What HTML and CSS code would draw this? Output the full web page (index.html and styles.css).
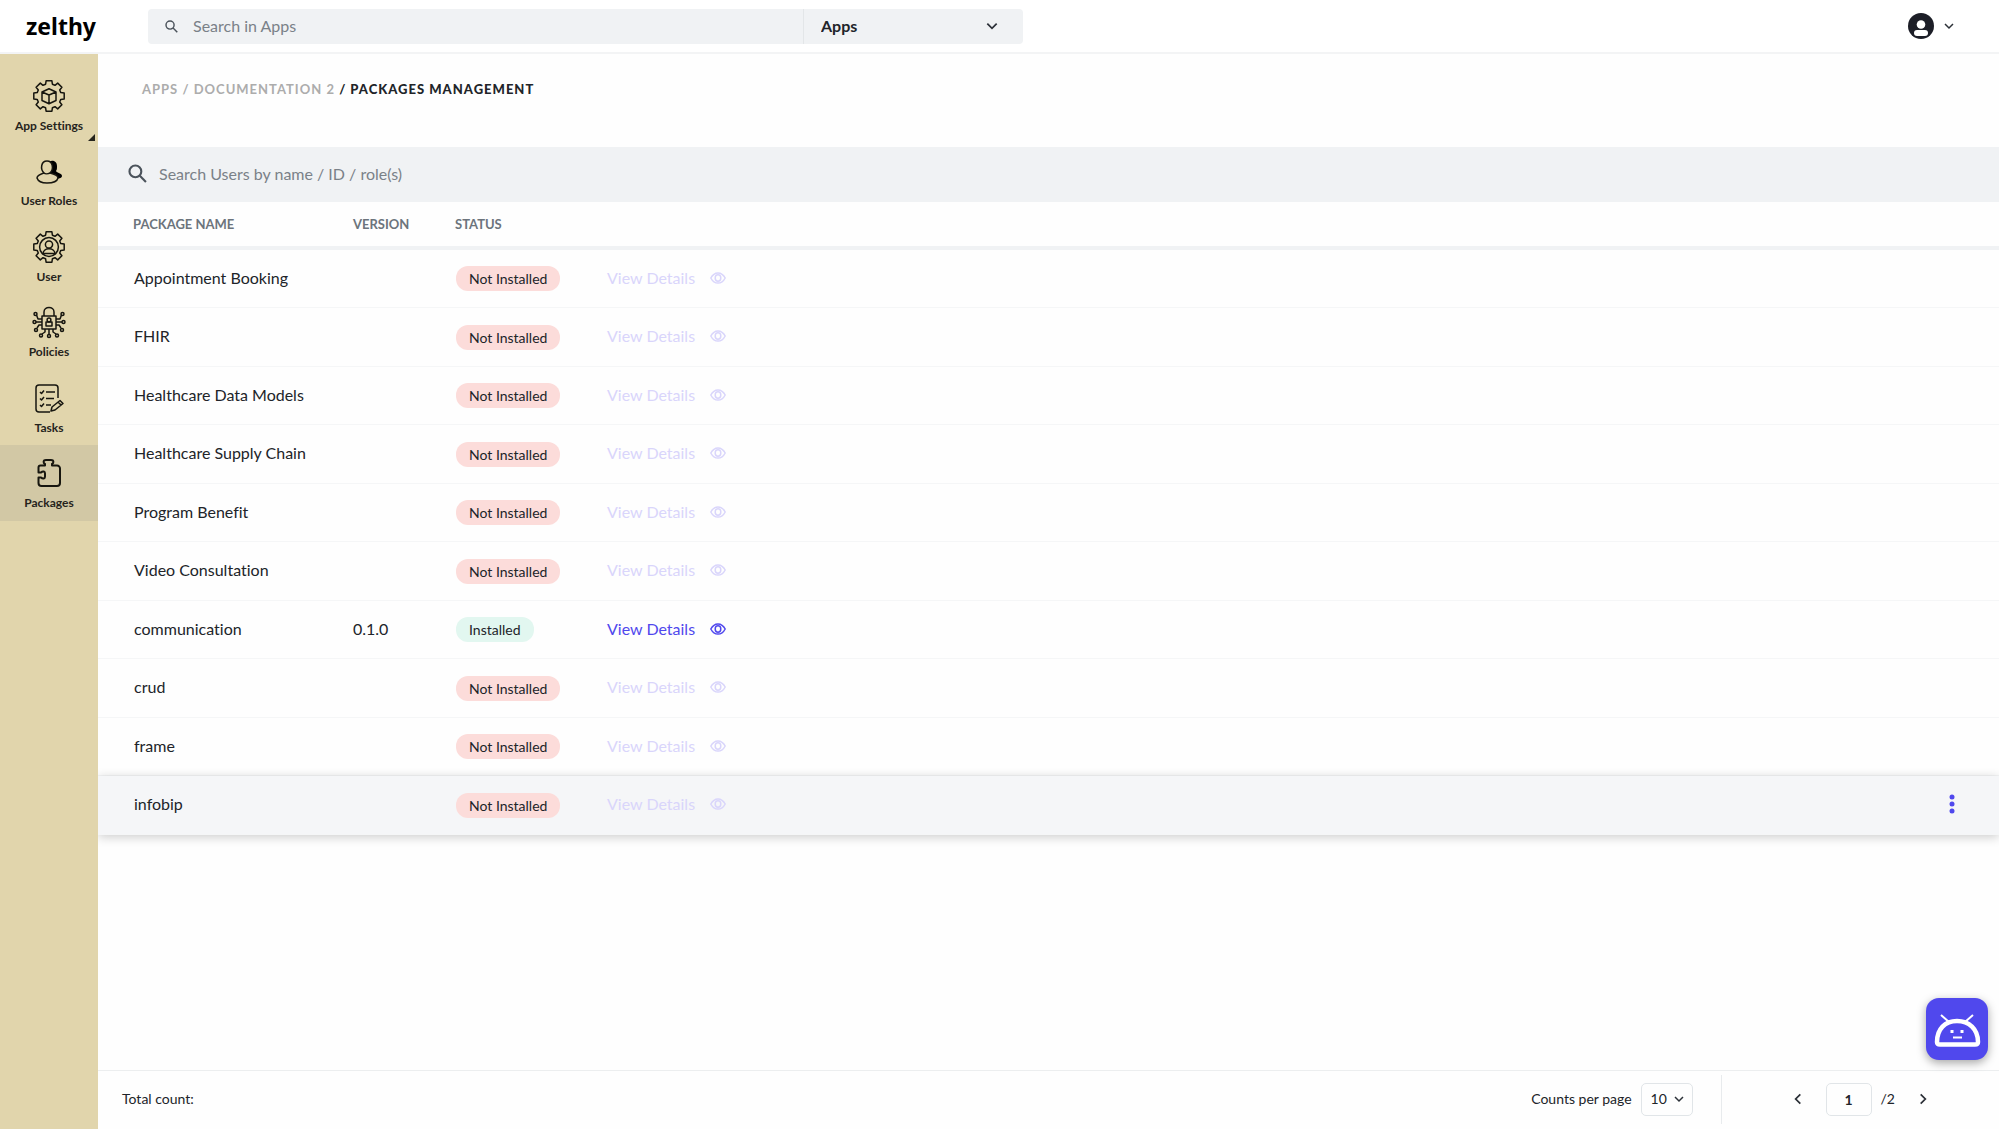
FILE: index.html
```html
<!DOCTYPE html>
<html lang="en">
<head>
<meta charset="utf-8">
<title>Packages Management</title>
<link rel="stylesheet" href="styles.css">
</head>
<body>
<svg class="sprite" aria-hidden="true">
  <symbol id="search" viewBox="0 0 18 18"><circle cx="7" cy="7" r="5.6"/><path d="M11.2 11.2 17 17"/></symbol>
  <symbol id="down" viewBox="0 0 12 12"><path d="M2 4l4 4 4-4"/></symbol>
  <symbol id="gear" viewBox="-17 -17 34 34"><path d="M15.2-2.9V2.9L11.8 3.4 10.7 6 12.9 8.7 8.7 12.9 6 10.7 3.4 11.8 2.9 15.2H-2.9L-3.4 11.8-6 10.7-8.7 12.9-12.9 8.7-10.7 6-11.8 3.4-15.2 2.9V-2.9L-11.8-3.4-10.7-6-12.9-8.7-8.7-12.9-6-10.7-3.4-11.8-2.9-15.2H2.9L3.4-11.8 6-10.7 8.7-12.9 12.9-8.7 10.7-6 11.8-3.4Z"/></symbol>
  <symbol id="eye" viewBox="0 0 16 16"><path d="M.8 8C2.6 4.6 5 2.9 8 2.9S13.400 4.600 15.200 8C13.400 11.400 11 13.100 8 13.100S2.600 11.400.8 8Z"/><ellipse cx="8" cy="8" rx="2.800" ry="3.200"/></symbol>
</svg>

<header class="topbar">
  <a class="logo" href="#">zelthy</a>
  <form class="global-search">
    <label class="global-field">
      <svg class="icon icon-small"><use href="#search"/></svg>
      <input class="global-input" type="search" placeholder="Search in Apps" aria-label="Search in Apps">
    </label>
    <div class="scope">
      <select class="scope-select" aria-label="Search scope"><option>Apps</option></select>
      <svg class="icon chevron"><use href="#down"/></svg>
    </div>
  </form>
  <button class="account" type="button" aria-label="Account">
    <svg class="avatar" viewBox="0 0 26 26"><circle cx="13" cy="13" r="13" fill="#1c1e27"/><circle cx="13" cy="11.5" r="4.3" fill="#fff"/><rect x="6" y="17" width="14" height="6" rx="3" fill="#fff"/></svg>
    <svg class="icon chevron chevron-thin"><use href="#down"/></svg>
  </button>
</header>

<div class="shell">
  <nav class="sidebar">
    <a class="nav-item has-submenu" href="#">
      <svg class="nav-icon" viewBox="-17 -17 34 34"><use href="#gear" x="-17" y="-17" width="34" height="34"/><path d="M0-7.3 7-4V4.500L0 7.800-7 4.500V-4ZM-7-4 0-1 7-4M0-1V7.800"/></svg>
      App Settings
    </a>
    <a class="nav-item" href="#">
      <svg class="nav-icon" viewBox="0 0 34 34"><path fill="#000" stroke="none" d="M16 9c1-3 9-4 9 3 0 2 0 4-1 5 1 2 6 2 6 5 0 2-3 3-6 2l-5-5Z"/><path class="nav-fill" d="M5 24c0-3 4-4 7-5-4-4-3-12 3-12s7 8 3 12c4 1 8 2 8 5-1 4-5 5-11 5S6 27 5 24Z"/><path d="M12 19c1 1 4 1 6 0"/></svg>
      User Roles
    </a>
    <a class="nav-item" href="#">
      <svg class="nav-icon" viewBox="-17 -17 34 34"><use href="#gear" x="-17" y="-17" width="34" height="34"/><circle r="9.400"/><circle cy="-2.500" r="3.600"/><path d="M-6 7C-6 0 6 0 6 7M-6 6.500H6"/></svg>
      User
    </a>
    <a class="nav-item" href="#">
      <svg class="nav-icon" viewBox="0 0 34 34"><path d="M10 11h14v13H10ZM12 11V7c0-6 10-6 10 0v4M14 21v-4h6v4ZM10 14H6L4.500 10M24 14h4l1.500-4M10 17H4M24 17h6M10 20H7l-2 3M24 20h3l2 3M13 24v3l-3 2M17 24v5M21 24v3l3 2"/><circle cx="17" cy="15" r="1.900"/><circle cx="3.500" cy="9" r="1.500"/><circle cx="30.500" cy="9" r="1.500"/><circle cx="2.500" cy="17" r="1.500"/><circle cx="31.500" cy="17" r="1.500"/><circle cx="4" cy="25" r="1.500"/><circle cx="30" cy="25" r="1.500"/><circle cx="9" cy="30.500" r="1.500"/><circle cx="17" cy="31" r="1.500"/><circle cx="25" cy="30.500" r="1.500"/></svg>
      Policies
    </a>
    <a class="nav-item" href="#">
      <svg class="nav-icon" viewBox="0 0 34 34"><path d="M18 31H7a3 3 0 0 1-3-3V7a3 3 0 0 1 3-3h16a3 3 0 0 1 3 3v10M14 11h9M14 17.500h8M14 24h5M8 11l1.500 1.500L12 9.500M8 17.500 9.500 19l2.500-3M8 24l1.500 1.500L12 22.500M19 30l1-4 8-6.500 3 3-8 6.500ZM26 21l3 3"/></svg>
      Tasks
    </a>
    <a class="nav-item current" href="#" aria-current="page">
      <svg class="nav-icon nav-bold" viewBox="0 0 34 34"><path d="M8.500 9.500H13V8c-2-1-2-4 1-4h5c3 0 3 3 1 4v1.500h5a3 3 0 0 1 3 3V27a3 3 0 0 1-3 3H9.500a3 3 0 0 1-3-3v-5.500H9c2 2 4 1 4-1v-3c0-2-2-3-4-1H6.500v-5a2 2 0 0 1 2-2Z"/></svg>
      Packages
    </a>
  </nav>

  <main class="content">
    <nav class="crumbs" aria-label="Breadcrumb">
      <a href="#">Apps</a> / <a href="#">Documentation 2</a> <strong>/ Packages Management</strong>
    </nav>
    <label class="user-search">
      <svg class="icon icon-search"><use href="#search"/></svg>
      <input class="user-input" type="search" placeholder="Search Users by name / ID / role(s)" aria-label="Search users">
    </label>

    <table class="packages">
      <colgroup><col class="col-name"><col class="col-version"><col class="col-status"><col class="col-view"><col><col class="col-menu"></colgroup>
      <thead><tr><th>Package Name</th><th>Version</th><th>Status</th><th></th><th></th><th></th></tr></thead>
      <tbody>
        <tr><td>Appointment Booking</td><td></td><td class="status"><span class="pill">Not Installed</span></td><td><button class="view" type="button" disabled>View Details <svg class="eye"><use href="#eye"/></svg></button></td><td></td><td></td></tr>
        <tr><td>FHIR</td><td></td><td class="status"><span class="pill">Not Installed</span></td><td><button class="view" type="button" disabled>View Details <svg class="eye"><use href="#eye"/></svg></button></td><td></td><td></td></tr>
        <tr><td>Healthcare Data Models</td><td></td><td class="status"><span class="pill">Not Installed</span></td><td><button class="view" type="button" disabled>View Details <svg class="eye"><use href="#eye"/></svg></button></td><td></td><td></td></tr>
        <tr><td>Healthcare Supply Chain</td><td></td><td class="status"><span class="pill">Not Installed</span></td><td><button class="view" type="button" disabled>View Details <svg class="eye"><use href="#eye"/></svg></button></td><td></td><td></td></tr>
        <tr><td>Program Benefit</td><td></td><td class="status"><span class="pill">Not Installed</span></td><td><button class="view" type="button" disabled>View Details <svg class="eye"><use href="#eye"/></svg></button></td><td></td><td></td></tr>
        <tr><td>Video Consultation</td><td></td><td class="status"><span class="pill">Not Installed</span></td><td><button class="view" type="button" disabled>View Details <svg class="eye"><use href="#eye"/></svg></button></td><td></td><td></td></tr>
        <tr><td>communication</td><td>0.1.0</td><td class="status"><span class="pill pill-ok">Installed</span></td><td><button class="view" type="button">View Details <svg class="eye"><use href="#eye"/></svg></button></td><td></td><td></td></tr>
        <tr><td>crud</td><td></td><td class="status"><span class="pill">Not Installed</span></td><td><button class="view" type="button" disabled>View Details <svg class="eye"><use href="#eye"/></svg></button></td><td></td><td></td></tr>
        <tr><td>frame</td><td></td><td class="status"><span class="pill">Not Installed</span></td><td><button class="view" type="button" disabled>View Details <svg class="eye"><use href="#eye"/></svg></button></td><td></td><td></td></tr>
        <tr class="active"><td>infobip</td><td></td><td class="status"><span class="pill">Not Installed</span></td><td><button class="view" type="button" disabled>View Details <svg class="eye"><use href="#eye"/></svg></button></td><td></td><td><button class="menu" type="button" aria-label="Row actions"><svg class="dots" viewBox="0 0 6 20"><circle cx="3" cy="3" r="2.500"/><circle cx="3" cy="10" r="2.500"/><circle cx="3" cy="17" r="2.500"/></svg></button></td></tr>
      </tbody>
    </table>

    <footer class="footer">
      <span class="total">Total count:</span>
      <label class="per-page" for="per-page">Counts per page</label>
      <div class="count">
        <select class="count-select" id="per-page"><option>10</option></select>
        <svg class="icon chevron chevron-thin"><use href="#down"/></svg>
      </div>
      <div class="pager">
        <button class="step" type="button" aria-label="Previous page"><svg class="icon chevron" viewBox="0 0 12 12"><path d="M8 2 4 6l4 4"/></svg></button>
        <input class="page" type="text" value="1" aria-label="Page">
        <span class="pages">/2</span>
        <button class="step" type="button" aria-label="Next page"><svg class="icon chevron" viewBox="0 0 12 12"><path d="M4 2l4 4-4 4"/></svg></button>
      </div>
    </footer>
  </main>
</div>

<button class="bot" type="button" aria-label="Open assistant">
  <svg viewBox="0 0 62 62" fill="none" stroke="#fff"><path stroke-width="4.500" d="M11 44c0-13 8-21 20-21s21 8 21 21c0 1.500-1 2.500-3 2.500H14c-2 0-3-1-3-2.500Z"/><path stroke-width="2" d="M15 17l8 7M47 17l-8 7M27 39.500h9"/><path stroke="none" fill="#fff" d="M24.500 32h3v3h-3ZM34.500 32h3v3h-3Z"/></svg>
</button>
</body>
</html>
```
FILE: styles.css
```css
* { box-sizing: border-box; }

body {
  margin: 0;
  min-height: 100vh;
  display: flex;
  flex-direction: column;
  background: #fefefe;
  color: #212429;
  font: 16px/20px Lato, sans-serif;
  font-variant-ligatures: none;
}

button, input, select {
  margin: 0;
  padding: 0;
  border: 0;
  background: none;
  color: inherit;
  font: inherit;
  appearance: none;
  outline: 0;
}

a { color: inherit; text-decoration: none; }
input::placeholder { color: #7a8188; opacity: 1; }

.sprite { display: none; }

.icon {
  flex: none;
  fill: none;
  stroke: #4b535b;
  stroke-width: 2;
}
.icon-small { width: 13px; height: 13px; }
.icon-search { width: 19px; height: 19px; }
.chevron { width: 14px; height: 14px; stroke: #2c3138; stroke-width: 1.5; pointer-events: none; }
.chevron-thin { width: 12px; height: 12px; }

.topbar {
  display: flex;
  align-items: center;
  height: 54px;
  border-bottom: 2px solid #f3f4f5;
  background: #fff;
}

.logo {
  width: 148px;
  padding-left: 26px;
  color: #000;
  font: bold 23px/28px "Noto Sans", sans-serif;
}

.global-search {
  display: flex;
  width: 875px;
  height: 35px;
  border-radius: 4px;
  background: #f0f2f4;
}
.global-field {
  flex: 1;
  display: flex;
  align-items: center;
  gap: 15px;
  padding-left: 17px;
}
.global-input { flex: 1; }

.scope {
  display: grid;
  grid-template-columns: 1fr 14px 24px;
  align-items: center;
  width: 220px;
  border-left: 1px solid #e3e6e8;
}
.scope-select {
  grid-area: 1 / 1 / 2 / 4;
  height: 35px;
  padding-left: 17px;
  font-weight: bold;
}
.scope .chevron { grid-area: 1 / 2; }

.account {
  display: flex;
  align-items: center;
  gap: 9px;
  margin-left: auto;
  padding-right: 44px;
}
.avatar { width: 26px; height: 26px; }

.shell { flex: 1; display: flex; }

.sidebar {
  flex: none;
  display: flex;
  flex-direction: column;
  z-index: 1;
  width: 98px;
  padding-top: 14px;
  background: #e1d5ac;
}
.nav-item {
  display: flex;
  flex-direction: column;
  align-items: center;
  gap: 5px;
  height: 75px;
  padding-top: 11px;
  color: #26241c;
  font-size: 12px;
  font-weight: bold;
  line-height: 16px;
}
.nav-item:nth-child(even) { height: 76px; }
.nav-icon {
  width: 34px;
  height: 34px;
  fill: none;
  stroke: #17160f;
  stroke-width: 1.5;
  stroke-linejoin: round;
}
.nav-fill { fill: #e1d5ac; }
.nav-bold { stroke-width: 2; }
.current { background: #d2c8a5; }
.has-submenu { position: relative; }
.has-submenu::after {
  content: "";
  position: absolute;
  right: 3px;
  bottom: 2px;
  border-left: 7px solid transparent;
  border-bottom: 7px solid #26241c;
}

.content {
  flex: 1;
  display: flex;
  flex-direction: column;
  min-width: 0;
}

.crumbs {
  height: 93px;
  padding: 25px 44px;
  color: #acacac;
  font-size: 13px;
  font-weight: bold;
  letter-spacing: 1px;
  text-transform: uppercase;
}
.crumbs strong { color: #212429; font-weight: 900; }

.user-search {
  display: flex;
  align-items: center;
  gap: 12px;
  height: 55px;
  padding: 0 30px 2px;
  background: #f0f2f4;
}
.user-input { flex: 1; }

.packages {
  width: 100%;
  table-layout: fixed;
  border-collapse: separate;
  border-spacing: 0;
}
.col-name { width: 234px; }
.col-version { width: 102px; }
.col-status { width: 152px; }
.col-view { width: 165px; }
.col-menu { width: 209px; }

th, td { padding: 0 0 2px 21px; text-align: left; }
th:first-child { padding-left: 35px; }
td:first-child { padding-left: 36px; }
th {
  height: 48px;
  padding-bottom: 0;
  border-bottom: 4px solid #f0f2f4;
  color: #6c747c;
  font-size: 13px;
  text-transform: uppercase;
}
td {
  height: 58px;
  border-bottom: 1px solid #f5f6f7;
  vertical-align: middle;
}
tr:nth-child(even) td { height: 59px; }
.status { padding: 0 0 0 22px; }

.active { background: #f5f6f8; box-shadow: 0 2px 10px rgba(0, 0, 0, .2); }

.pill {
  display: inline-block;
  height: 25px;
  padding: 0 13px;
  border-radius: 12px;
  background: #fcdcda;
  font-size: 14px;
  line-height: 25px;
  vertical-align: middle;
}
.pill-ok { background: #e2f7f0; }

.view {
  display: flex;
  align-items: center;
  gap: 15px;
  color: #5048ed;
}
.view:disabled { color: #d9d5fb; }
.eye { width: 16px; height: 16px; fill: none; stroke: currentColor; stroke-width: 1.5; }

.menu { display: block; margin-left: 138px; }
.dots { display: block; width: 6px; height: 20px; fill: #5048ed; }

.footer {
  display: flex;
  align-items: center;
  height: 59px;
  margin-top: auto;
  padding: 0 69px 2px 24px;
  border-top: 1px solid #eceeef;
  font-size: 14px;
}
.total { margin-right: auto; }

.count {
  display: grid;
  grid-template-columns: 1fr 12px 8px;
  align-items: center;
  width: 52px;
  margin: 0 28px 0 9px;
}
.count-select, .page {
  height: 33px;
  border: 1px solid #e1e5e8;
  border-radius: 5px;
}
.count-select {
  grid-area: 1 / 1 / 2 / 4;
  padding-left: 9px;
}
.count .chevron { grid-area: 1 / 2; }

.pager {
  display: flex;
  align-items: center;
  height: 49px;
  padding-left: 69px;
  border-left: 1px solid #e8ebed;
}
.step { display: flex; }
.page {
  width: 46px;
  margin: 0 9px 0 21px;
  text-align: center;
  font-weight: bold;
}
.pages { margin-right: 21px; }

.bot {
  position: fixed;
  right: 11px;
  bottom: 69px;
  width: 62px;
  height: 62px;
  border-radius: 13px;
  background: #5048ed;
  box-shadow: 0 3px 10px rgba(0, 0, 0, .35);
}
.bot svg { display: block; }
```
